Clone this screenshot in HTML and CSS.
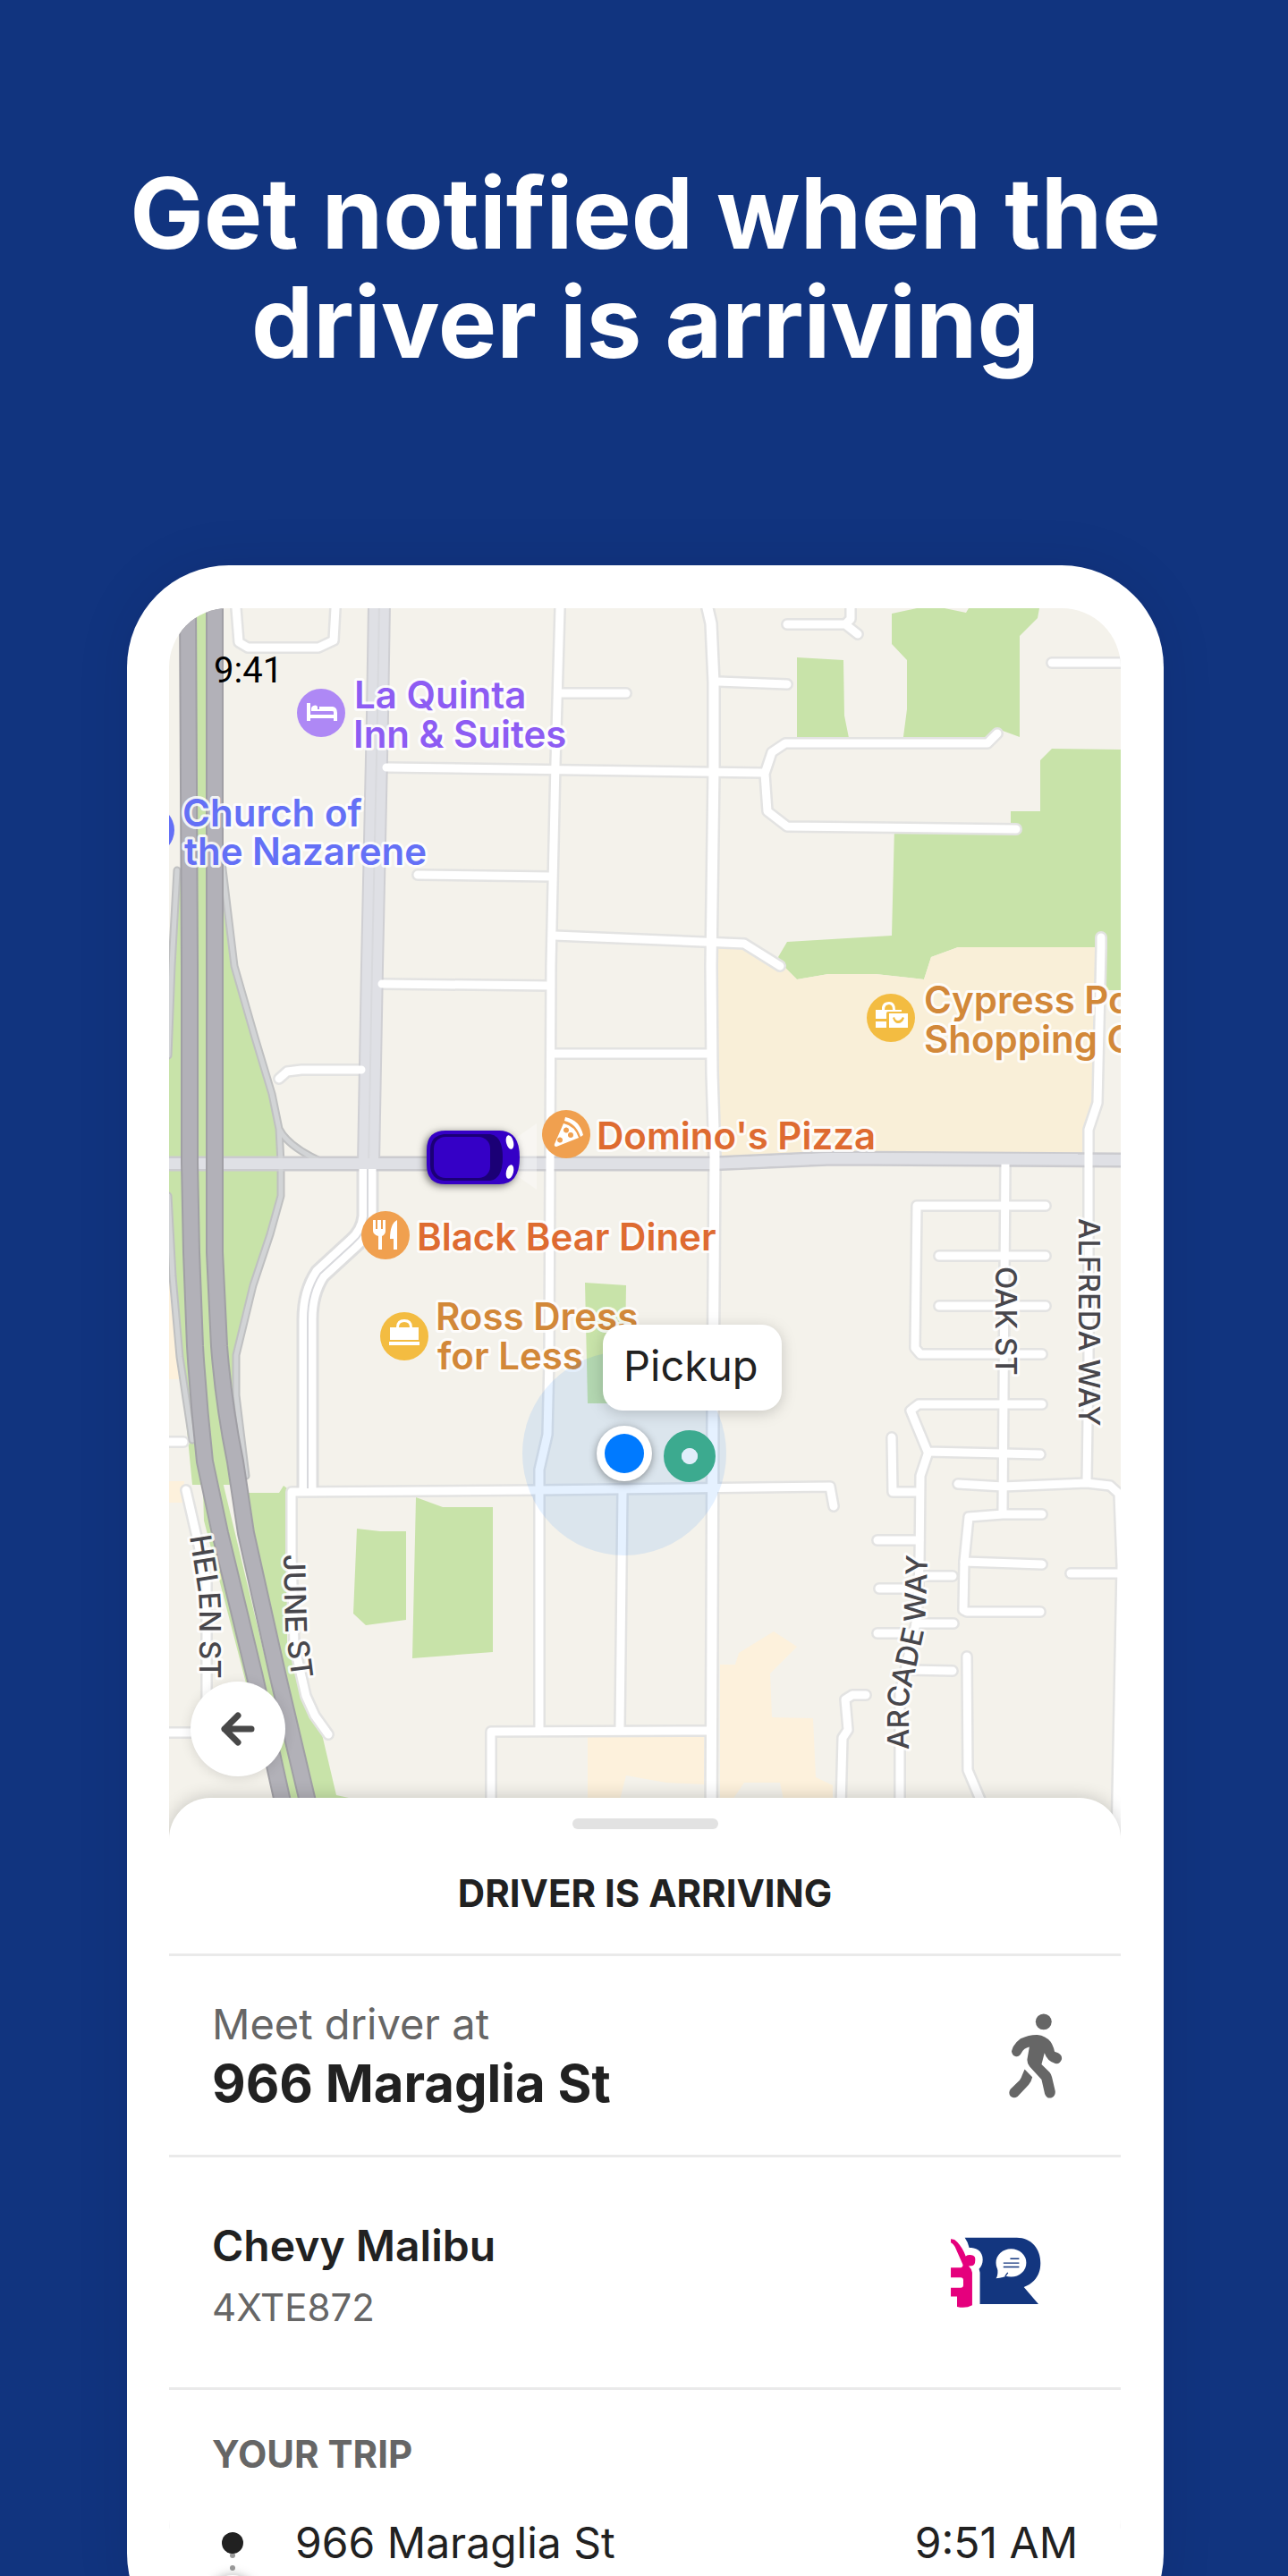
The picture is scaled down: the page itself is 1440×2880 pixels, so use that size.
FILE: index.html
```
<!DOCTYPE html>
<html lang="en">
<head>
<meta charset="utf-8">
<meta name="viewport" content="width=device-width, initial-scale=1">
<title>Get notified when the driver is arriving</title>
<link rel="stylesheet" href="styles.css">
</head>
<body>
<main class="page">
  <h1 class="headline">Get notified when the<br>driver is arriving</h1>

  <section class="phone">
    <div class="screen">
      <div class="map">
        <svg class="map-canvas" viewBox="189 680 1064 1376" role="img" aria-label="Map of the pickup area">
          <defs>
            <g id="streets">
              <path d="M264 680L267 718L277 724H356L373 716L375 680"/>
              <path d="M626 680L621 853L616 1080L614 1520L612 1604L603 1643V1933"/>
              <path d="M627 775H700"/>
              <path d="M432 858L853 864"/>
              <path d="M467 978L616 980"/>
              <path d="M620 1046L832 1055L872 1080"/>
              <path d="M803 762L880 765"/>
              <path d="M880 698H945L951 692V680M945 698L959 709"/>
              <path d="M1176 741H1260"/>
              <path d="M1115 820L1104 831H878L863 841L855 865L858 907L880 924L1136 927"/>
              <path d="M427 1100L614 1102"/>
              <path d="M312 1206L321 1198L337 1196H404"/>
              <path d="M620 1178H790"/>
              <path d="M1231 1048V1060L1227 1233L1217 1263V1520L1215 1656"/>
              <path d="M1124 1300L1121 1689"/>
              <path d="M1169 1348H1025L1023 1507L1029 1514H1165"/>
              <path d="M1050 1404H1169M1050 1460H1169"/>
              <path d="M1165 1570H1027L1018 1577L1037 1623L1163 1626"/>
              <path d="M1038 1623L1029 1650L1028 1750L1025 1811L1006 1893V2060"/>
              <path d="M997 1607L998 1668H1025"/>
              <path d="M1071 1659L1121 1662L1215 1658L1241 1661L1251 1670L1254 1750L1248 2060"/>
              <path d="M1165 1693H1121L1083 1696L1078 1746L1077 1800L1081 1802H1163"/>
              <path d="M1078 1746L1165 1749"/>
              <path d="M1197 1759H1254"/>
              <path d="M981 1722H1028M983 1776H1025M1030 1762H1065M981 1826H1022M1024 1815H1066M1016 1867L1065 1868"/>
              <path d="M1081 1852L1082 1979L1096 2012"/>
              <path d="M968 1895H953L945 1900L948 1934L942 1943L939 2060"/>
              <path d="M367 1939L352 1918L342 1896L329 1839L326 1739V1668L603 1666L928 1662L932 1684"/>
              <path d="M696 1668L693 1933"/>
              <path d="M549 2060V1936L792 1935"/>
              <path d="M180 1612H205"/>
              <path d="M208 1666L220 1718L231 1770V1937M180 1937H260"/>
            </g>
            <path id="avenue" d="M791 680L795 697L798 763V860L795 1080L796 1200L799 1293L797 1579L795 2060"/>
            <path id="boulevard" d="M411 1306V1360Q409 1378 395 1390L358 1424Q344 1445 344 1475V1664"/>
            <path id="ramps" d="M247 955L262 1080L285 1160L304 1223L312 1262Q322 1282 360 1299M312 1262L314 1300V1337L302 1380L283 1437L264 1515L264 1560L275 1650M198 973L192 1080L188 1180M188 1337L193 1427L201 1517L215 1610"/>
            <path id="arterial" d="M185 1301H795L930 1295L1258 1297"/>
            <path id="collector" d="M424 675L422 800L416 1080L412 1302"/>
            <path id="freeway-a" d="M210 675L212 1080V1300L214 1400L218 1505Q222 1570 229 1634L246 1714L285 1875L315 2010L326 2060"/>
            <path id="freeway-b" d="M240 675V1400L245 1505Q250 1570 263 1634L275 1714L311 1875L343 2010L355 2060"/>
            <path id="helen" d="M212 1718L220 1768Q223 1785 223 1800V1890"/>
            <path id="june" d="M317 1738L319 1820L328 1890"/>
            <path id="arcade" d="M1016 1956V1900L1034 1820L1038 1720"/>
          </defs>

          <rect class="land" x="189" y="680" width="1064" height="1376"/>

          <g class="parks">
            <path d="M891 735L943 738L944 800L949 825H891Z"/>
            <path d="M997 686L1025 680H1056L1080 685L1083 680H1162L1160 691L1140 711V824L1121 817L1098 831H1009L1014 793V738L997 720Z"/>
            <path d="M1176 837L1253 838V1107H1232V1059H1071L1041 1070L1033 1095L979 1089H926L891 1095L876 1080L870 1070L880 1053L997 1046L1000 924H1130V907H1163V850Z"/>
            <path d="M654 1434L700 1437L698 1569H657Z"/>
            <path d="M399 1709L425 1712H454V1811L409 1817L395 1804Z"/>
            <path d="M465 1674L495 1685H551V1847L461 1854Z"/>
            <path d="M247 955L262 1080L285 1160L304 1223L312 1262L314 1337L283 1437L262 1515L273 1660H215L201 1517L189 1380V1130L198 973Z"/>
            <path d="M270 1669H312L317 1661L321 1664V1839L339 1886L360 1939L376 2007L390 2010V2056H350Z"/>
            <path d="M220 680H231V1300L245 1640L345 2056H320L228 1700L216 1300Z"/>
          </g>
          <g class="shops">
            <path d="M803 1058H832L876 1080L891 1095L926 1089H979L1033 1095L1041 1070L1071 1059H1227V1233L1217 1263V1290H891L803 1295Z"/>
          </g>
          <g class="mall">
            <path d="M657 1941H787V1995L745 1993L700 1985L693 2012H657Z"/>
            <path d="M805 1861H822L826 1848L865 1824L891 1841L861 1871L863 1920L909 1921L912 1987L931 1996V2012H876L872 1993H832L819 2012H805Z"/>
            <path d="M189 1427L198 1520L206 1542H189ZM189 1656H206L204 1680H189Z"/>
          </g>

          <use href="#streets" class="street-edge"/>
          <use href="#avenue" class="avenue-edge"/>
          <use href="#boulevard" class="boulevard-edge"/>
          <use href="#ramps" class="ramp-edge"/>
          <use href="#arterial" class="arterial-edge"/>
          <use href="#collector" class="collector-edge"/>
          <use href="#ramps" class="ramp"/>
          <use href="#arterial" class="arterial"/>
          <use href="#collector" class="collector"/>
          <use href="#collector" class="center-line"/>
          <use href="#streets" class="street"/>
          <use href="#avenue" class="avenue"/>
          <use href="#boulevard" class="boulevard"/>
          <use href="#boulevard" class="center-line"/>
          <path class="arterial" d="M400 1301H603M626 1301H782M815 1300L930 1295L1205 1296M1229 1297H1258"/>
          <use href="#freeway-a" class="freeway-edge"/>
          <use href="#freeway-b" class="freeway-edge"/>
          <use href="#freeway-a" class="freeway"/>
          <use href="#freeway-b" class="freeway"/>

          <g class="street-name">
            <text><textPath href="#helen">HELEN ST</textPath></text>
            <text><textPath href="#june">JUNE ST</textPath></text>
            <text><textPath href="#arcade">ARCADE WAY</textPath></text>
            <text transform="translate(1113 1416) rotate(90)">OAK ST</text>
            <text transform="translate(1206 1362) rotate(90)">ALFREDA WAY</text>
          </g>

          <g class="place hotel">
            <circle cx="359" cy="797" r="27"/>
            <path class="glyph" d="M343 786H347V799H373V796Q373 795 371 795H348V793A4 4 0 0 1 355 790V793H357V790H372Q377 791 377 797V806H373V803H347V806H343Z"/>
            <text x="396" y="792">La Quinta</text>
            <text x="395" y="836">Inn &amp; Suites</text>
          </g>
          <g class="place church">
            <circle cx="168" cy="928" r="27"/>
            <text x="204" y="924">Church of</text>
            <text x="206" y="967">the Nazarene</text>
          </g>
          <g class="place mall-label">
            <circle cx="996" cy="1138" r="27"/>
            <path class="glyph" d="M979 1129H986V1126Q987 1120 994 1120Q1001 1120 1001 1129H1008V1131H993Q991 1131 991 1133V1139H979ZM989 1129H998Q998 1123 994 1123Q989 1123 989 1129ZM979 1142H991V1149H979ZM994 1133H1015V1149H994ZM998 1138Q1000 1144 1004 1144Q1009 1144 1011 1138L1009 1137Q1007 1141 1004 1141Q1001 1141 1000 1137Z" fill-rule="evenodd"/>
            <text x="1033" y="1133">Cypress Point</text>
            <text x="1033" y="1177">Shopping Center</text>
          </g>
          <g class="place food">
            <circle cx="633" cy="1268" r="27"/>
            <path class="glyph" d="M632 1249Q648 1252 652 1269L649 1271Q644 1256 631 1253ZM630 1256Q643 1259 647 1272L622 1282Q619 1282 620 1279ZM630 1263A3 3 0 1 0 636 1264A3 3 0 1 0 630 1263ZM635 1269A3 3 0 1 0 641 1269A3 3 0 1 0 635 1269ZM623 1274A3 3 0 1 0 629 1275A3 3 0 1 0 623 1274Z" fill-rule="evenodd"/>
            <text x="667" y="1285">Domino's Pizza</text>
          </g>
          <g class="place food">
            <circle cx="431" cy="1381" r="27"/>
            <path class="glyph" d="M417 1364H420V1374H422V1364H426V1374H428V1364H431V1376Q431 1380 427 1382V1397H423V1382Q417 1380 417 1376ZM444 1364V1397H440V1385H436Q436 1368 444 1364Z"/>
            <text x="466" y="1398">Black Bear Diner</text>
          </g>
          <g class="place shop">
            <circle cx="452" cy="1494" r="27"/>
            <path class="glyph" d="M436 1484H443Q443 1475 452 1475Q461 1475 461 1484H468V1498H436ZM446 1484H458Q458 1478 452 1478Q446 1478 446 1484ZM435 1500H469V1504H435Z" fill-rule="evenodd"/>
            <text x="487" y="1487">Ross Dress</text>
            <text x="489" y="1531">for Less</text>
          </g>

          <g class="car">
            <path class="beam" d="M577 1272L600 1256V1330L577 1314Z"/>
            <path class="car-body" d="M498 1264H558Q581 1264 581 1294Q581 1324 558 1324H498Q477 1324 477 1302V1286Q477 1264 498 1264Z"/>
            <path class="car-glass" d="M496 1268H548Q562 1270 562 1294Q562 1318 548 1320H496Q481 1318 481 1302V1286Q481 1270 496 1268Z"/>
            <rect class="car-roof" x="485" y="1271" width="63" height="46" rx="13"/>
            <ellipse class="lamp" cx="570" cy="1277" rx="4" ry="8" transform="rotate(-14 570 1277)"/>
            <ellipse class="lamp" cx="570" cy="1310" rx="4" ry="8" transform="rotate(14 570 1310)"/>
          </g>

          <circle class="accuracy" cx="698" cy="1625" r="114"/>
          <g class="callout">
            <rect x="674" y="1481" width="200" height="96" rx="22"/>
            <text x="697" y="1544">Pickup</text>
          </g>
          <circle class="me-ring" cx="698" cy="1625" r="31"/>
          <circle class="me" cx="698" cy="1625" r="22"/>
          <circle class="pickup-ring" cx="771" cy="1628" r="19"/>
          <circle class="pickup-hole" cx="771" cy="1628" r="9"/>
        </svg>
        <time class="clock">9:41</time>
        <button class="back" type="button" aria-label="Back">
          <svg class="back-icon" viewBox="0 0 40 40" aria-hidden="true"><path d="M35 20H5M20 5L5 20L20 35"/></svg>
        </button>
      </div>

      <div class="sheet">
        <header class="sheet-head">
          <div class="handle"></div>
          <h2 class="sheet-title">DRIVER IS ARRIVING</h2>
        </header>

        <div class="row meet">
          <div>
            <p class="meet-label">Meet driver at</p>
            <p class="address">966 Maraglia St</p>
          </div>
          <svg class="walk" viewBox="290 90 190 296" aria-hidden="true">
            <circle cx="413" cy="123" r="27"/>
            <path d="M338 228Q331 241 320 240Q306 237 305 222Q310 198 335 180Q365 166 392 167Q420 170 436 190Q446 204 450 224L462 228Q476 235 474 249Q468 267 452 264Q424 254 416 228L406 267L433 293Q439 300 441 310L452 356Q454 372 440 379Q424 384 417 366L406 318L366 274Q356 262 358 248L365 208Q346 212 338 228Z"/>
            <path d="M349 283L375 310Q372 325 362 336L325 375Q312 384 301 374Q293 362 301 350L332 320Q338 312 341 302Z"/>
          </svg>
        </div>

        <div class="row vehicle">
          <div>
            <p class="model">Chevy Malibu</p>
            <p class="plate">4XTE872</p>
          </div>
          <svg class="logo" viewBox="98 842 308 244" role="img" aria-label="Ride service">
            <path class="logo-blue" d="M147 847H322C372 847 402 885 402 932C402 970 385 998 346 1014L395 1071H198V965L195 953C212 935 212 903 192 889C183 882 172 881 162 881Q158 862 147 847Z"/>
            <ellipse class="logo-white" cx="303" cy="932" rx="51" ry="47"/>
            <path class="logo-white" d="M257 950Q260 975 252 984Q278 983 292 973Z"/>
            <path class="logo-lines" d="M300 918H330M277 933H330M277 946H330M292 965L283 977"/>
            <path class="logo-pink" d="M100 852Q112 851 122 862Q142 884 150 910Q158 904 170 906Q184 908 182 924Q182 941 170 942L160 943Q171 953 172 965V1075Q150 1087 121 1080V1045H100V1016H133Q142 1016 142 1007V990Q142 981 133 981H100V948H134Q144 945 139 935L117 885Q110 868 100 864Z"/>
          </svg>
        </div>

        <section class="trip">
          <h3 class="trip-title">YOUR TRIP</h3>
          <div class="stop">
            <svg class="rail" viewBox="0 0 46 70" aria-hidden="true">
              <circle class="rail-tick" cx="23" cy="44" r="3"/>
              <circle class="rail-tick" cx="23" cy="58" r="3"/>
              <circle class="rail-dot" cx="23" cy="30" r="12"/>
              <circle class="rail-next" cx="23" cy="94" r="28"/>
            </svg>
            <span class="stop-name">966 Maraglia St</span>
            <time class="stop-time">9:51 AM</time>
          </div>
        </section>
      </div>
    </div>
  </section>
</main>
</body>
</html>
```
FILE: styles.css
```
* { box-sizing: border-box; }

body {
  margin: 0;
  background: #11347f;
  color: #212121;
  font-family: Inter, "Liberation Sans", sans-serif;
}

h1, h2, h3, p { margin: 0; }

.page {
  height: 100vh;
  overflow: hidden;
  padding: 177px 139px 0 142px;
}

.headline {
  margin: 0 0 211px;
  color: #fff;
  font-size: 110px;
  font-weight: 700;
  line-height: 122px;
  text-align: center;
  white-space: nowrap;
}

.phone {
  padding: 48px 48px 86px 47px;
  border-radius: 114px;
  background: #fff;
  box-shadow: 0 0 60px rgba(0, 0, 40, .1);
}

.screen {
  overflow: hidden;
  border-radius: 66px;
}

/* Map */
.map { position: relative; }
.map-canvas { display: block; width: 100%; }

.land { fill: #f4f2eb; }
.parks { fill: #c8e3a9; }
.shops { fill: #f9efd8; }
.mall { fill: #fdf1dc; }

.street, .street-edge, .avenue, .avenue-edge, .boulevard, .boulevard-edge,
.ramp, .ramp-edge, .arterial, .arterial-edge, .collector, .collector-edge,
.freeway, .freeway-edge, .center-line {
  fill: none;
  stroke-linecap: round;
  stroke-linejoin: round;
}
.street-edge { stroke: #e3e3e2; stroke-width: 14px; }
.street { stroke: #fff; stroke-width: 9px; }
.avenue-edge { stroke: #e3e3e2; stroke-width: 16px; }
.avenue { stroke: #fff; stroke-width: 11px; }
.boulevard-edge { stroke: #dedede; stroke-width: 25px; stroke-linecap: butt; }
.boulevard { stroke: #fff; stroke-width: 19px; stroke-linecap: butt; }
.ramp-edge { stroke: #bfc0c1; stroke-width: 9px; }
.ramp { stroke: #d2d4d6; stroke-width: 5px; }
.arterial-edge { stroke: #cbcbcf; stroke-width: 17px; }
.arterial { stroke: #dfe0e5; stroke-width: 12px; stroke-linecap: butt; }
.collector-edge { stroke: #cfcfd3; stroke-width: 26px; stroke-linecap: butt; }
.collector { stroke: #dfe0e5; stroke-width: 22px; stroke-linecap: butt; }
.center-line { stroke: #d8d9dd; stroke-width: 2px; stroke-linecap: butt; }
.freeway-edge { stroke: #a09fa5; stroke-width: 20px; }
.freeway { stroke: #b2b1b8; stroke-width: 16px; }

.street-name, .place {
  paint-order: stroke;
  stroke: rgba(255, 255, 255, .85);
  stroke-width: 6px;
  stroke-linejoin: round;
}
.street-name { fill: #48474c; font-size: 33px; font-weight: 500; }
.place { font-size: 42px; font-weight: 600; }
.place circle, .glyph { stroke: none; }
.hotel { fill: #8d5cf3; }
.hotel circle { fill: #ae88f5; }
.church { fill: #6470f6; }
.food { fill: #de6b31; }
.food circle { fill: #f0a04f; }
.shop, .mall-label { fill: #d28839; }
.shop circle, .mall-label circle { fill: #f3bc41; }
.place .glyph { fill: #fff; }

.car-body { fill: #3500c6; filter: drop-shadow(-2px 2px 4px rgba(0, 0, 0, .55)); }
.car-glass { fill: #1b0076; }
.car-roof { fill: #3500c6; }
.lamp { fill: #fff; }
.beam { fill: rgba(255, 255, 255, .35); }

.accuracy { fill: rgba(0, 122, 255, .1); }
.callout rect { fill: #fff; filter: drop-shadow(0 3px 8px rgba(0, 0, 0, .18)); }
.callout text { fill: #212121; font-size: 47px; }
.me-ring { fill: #fff; filter: drop-shadow(0 2px 5px rgba(0, 0, 0, .4)); }
.me { fill: #007aff; }
.pickup-ring { fill: none; stroke: #3caa8f; stroke-width: 20px; }
.pickup-hole { fill: #e0eefb; }

.clock {
  position: absolute;
  top: 50px;
  left: 50px;
  color: #000;
  font-family: Roboto, "Liberation Sans", sans-serif;
  font-size: 40px;
  line-height: 40px;
}

.back {
  position: absolute;
  bottom: 70px;
  left: 24px;
  display: grid;
  place-items: center;
  width: 106px;
  height: 106px;
  padding: 0;
  border: 0;
  border-radius: 50%;
  background: #fff;
  box-shadow: 0 2px 14px rgba(0, 0, 0, .12);
}
.back-icon {
  width: 40px;
  height: 40px;
  fill: none;
  stroke: #484848;
  stroke-width: 7px;
  stroke-linecap: round;
  stroke-linejoin: round;
}

/* Ride sheet */
.sheet {
  position: relative;
  margin-top: -46px;
  border-radius: 46px 46px 0 0;
  background: #fff;
  box-shadow: 0 0 20px rgba(0, 0, 0, .2);
}

.sheet-head {
  padding: 23px 48px 37px;
  border-bottom: 3px solid #eaeaea;
  text-align: center;
}
.handle {
  width: 163px;
  height: 12px;
  margin: 0 auto 42px;
  border-radius: 6px;
  background: #e2e2e2;
}
.sheet-title { font-size: 42px; font-weight: 700; line-height: 60px; }

.row {
  display: flex;
  align-items: center;
  justify-content: space-between;
  border-bottom: 3px solid #eaeaea;
}

.meet { padding: 45px 64px 45px 48px; }
.meet-label { color: #666; font-size: 47px; line-height: 62px; }
.address { font-size: 58px; font-weight: 700; line-height: 70px; }
.walk { width: 63px; height: 99px; fill: #666; }

.vehicle { padding: 67px 88px 52px 48px; }
.model { font-size: 48px; font-weight: 600; line-height: 64px; }
.plate { color: #666; font-size: 42px; line-height: 74px; }
.logo { width: 103px; height: 81px; margin-bottom: 16px; }
.logo-blue { fill: #13367f; }
.logo-white { fill: #fff; }
.logo-lines { fill: none; stroke: #13367f; stroke-width: 4px; }
.logo-pink { fill: #e5007d; }

.trip { padding: 42px 48px 0; }
.trip-title { color: #666; font-size: 42px; font-weight: 700; line-height: 60px; }
.stop {
  display: flex;
  align-items: flex-start;
  margin-top: 39px;
  font-size: 48px;
  line-height: 60px;
}
.stop-name { flex: 1; padding-left: 47px; }
.rail { flex: none; width: 46px; height: 70px; overflow: visible; }
.rail-dot { fill: #212121; }
.rail-tick { fill: #9a9a9a; }
.rail-next { fill: #fff; filter: drop-shadow(0 0 6px rgba(0, 0, 0, .3)); }
```
